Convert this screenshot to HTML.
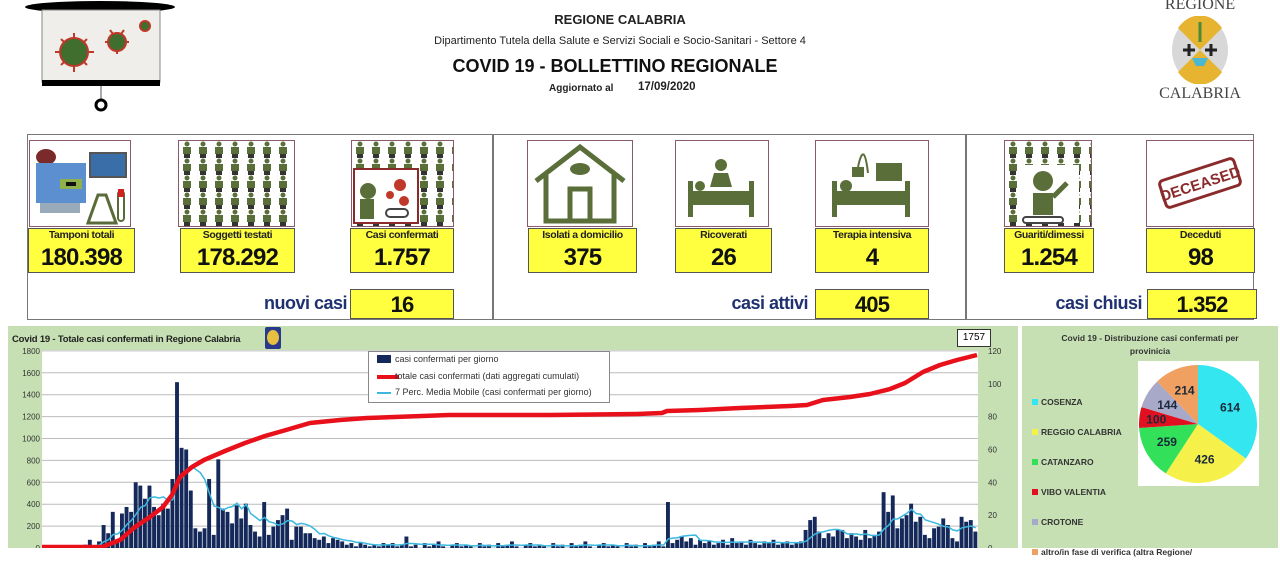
<!DOCTYPE html>
<html><head><meta charset="utf-8">
<style>
*{margin:0;padding:0;box-sizing:border-box}
body{width:1280px;height:548px;overflow:hidden;background:#fff;font-family:"Liberation Sans",sans-serif;position:relative}
.a{position:absolute}
.t{text-align:center;white-space:nowrap}
.img{position:absolute;border:1.5px solid #8a5a6a;background:#fff;overflow:hidden}
.lab{position:absolute;background:#ffff40;border:1.5px solid #555;font-size:10.5px;font-weight:bold;text-align:center;height:15px;line-height:13px;color:#222;letter-spacing:-0.4px}
.val{position:absolute;background:#ffff40;border:1.5px solid #555;border-top:none;font-size:24px;letter-spacing:-0.8px;font-weight:bold;text-align:center;height:31px;line-height:31px;color:#111}
.big{position:absolute;background:#ffff40;border:1.5px solid #555;font-size:22px;letter-spacing:-0.8px;font-weight:bold;text-align:center;height:30px;line-height:30px;color:#111}
.sum{position:absolute;font-size:18px;letter-spacing:-0.5px;font-weight:bold;color:#1f3170;text-align:right;white-space:nowrap}
</style></head><body>

<svg class="a" style="left:25px;top:0" width="160" height="115">
<ellipse cx="75" cy="7" rx="75" ry="6" fill="#000"/>
<rect x="17" y="10" width="118" height="72" fill="#f0eeea" stroke="#888"/>
<rect x="17" y="80" width="118" height="6" fill="#000"/>
<line x1="76" y1="86" x2="76" y2="100" stroke="#556"/>
<circle cx="76" cy="105" r="5" fill="none" stroke="#000" stroke-width="3"/>
<g fill="#3f6e2e" stroke="#c0382a" stroke-width="2">
<circle cx="49" cy="52" r="14"/><circle cx="92" cy="42" r="9"/><circle cx="120" cy="26" r="5"/></g>
<g stroke="#c0382a" stroke-width="2">
<path d="M49 33v5M49 66v6M30 52h5M63 52h6M36 39l4 4M58 61l4 4M62 39l-4 4M36 65l4-4M85 30l3 4M99 30l-3 4M80 42h3M101 42h3M92 54v-3"/></g>
</svg>

<div class="a t" style="left:420px;top:12px;width:400px;font-size:13px;font-weight:bold;color:#222">REGIONE CALABRIA</div>
<div class="a t" style="left:380px;top:35px;width:480px;font-size:11px;color:#222">Dipartimento Tutela della Salute e Servizi Sociali e Socio-Sanitari - Settore 4</div>
<div class="a t" style="left:400px;top:56px;width:430px;font-size:18px;font-weight:bold;color:#111">COVID 19 - BOLLETTINO REGIONALE</div>
<div class="a" style="left:549px;top:83px;font-size:10px;font-weight:bold;color:#222">Aggiornato al</div>
<div class="a" style="left:638px;top:81px;font-size:11.5px;font-weight:bold;color:#222">17/09/2020</div>

<div class="a t" style="left:1150px;top:-4px;width:100px;font-family:'Liberation Serif',serif;font-size:16px;color:#444">REGIONE</div>
<svg class="a" style="left:1170px;top:16px" width="60" height="68">
<ellipse cx="30" cy="34" rx="28" ry="33" fill="#d8d8d8"/>
<path d="M30 34L8 12A28 33 0 0 1 52 12Z" fill="#e6b430"/>
<path d="M30 34L8 56A28 33 0 0 0 52 56Z" fill="#e6b430"/>
<path d="M30 6v20" stroke="#4a8a3a" stroke-width="3"/>
<path d="M22 42h16l-4 8h-8z" fill="#4ab8d0"/>
<path d="M13 34h12M19 28v12M35 34h12M41 28v12" stroke="#222" stroke-width="3"/>
</svg>
<div class="a t" style="left:1150px;top:85px;width:100px;font-family:'Liberation Serif',serif;font-size:16px;color:#444">CALABRIA</div>

<div class="a" style="left:27px;top:134px;width:1227px;height:186px;border:1.5px solid #777"></div>
<div class="a" style="left:492px;top:134px;width:1.5px;height:186px;background:#777"></div>
<div class="a" style="left:965px;top:134px;width:1.5px;height:186px;background:#777"></div>

<div class="img" style="left:29px;top:140px;width:102px;height:87px">
<svg width="100" height="85"><ellipse cx="16" cy="16" rx="10" ry="8" fill="#7a2a2a"/><rect x="6" y="22" width="50" height="40" fill="#5b8fcf"/><rect x="30" y="38" width="22" height="10" fill="#8fb04a"/><rect x="36" y="41" width="10" height="4" fill="#111"/><rect x="10" y="62" width="40" height="10" fill="#9ab"/><rect x="60" y="12" width="36" height="24" fill="#3a6ea8" stroke="#555" stroke-width="2"/><path d="M58 82l10-28h8l10 28z" fill="none" stroke="#5a6a3a" stroke-width="3"/><rect x="88" y="50" width="6" height="30" rx="3" fill="none" stroke="#5a6a3a" stroke-width="2"/><rect x="88" y="48" width="6" height="8" fill="#d02020"/></svg></div>
<div class="img" style="left:178px;top:140px;width:117px;height:87px">
<svg width="115" height="85"><defs><pattern id="p" width="16" height="17" patternUnits="userSpaceOnUse"><circle cx="8" cy="3" r="2.5" fill="#5a6e3a"/><rect x="4" y="6" width="8" height="7" fill="#5a6e3a"/><rect x="5" y="13" width="6" height="4" fill="#333"/></pattern></defs><rect width="115" height="85" fill="url(#p)"/></svg></div>
<div class="img" style="left:351px;top:140px;width:103px;height:87px">
<svg width="101" height="85"><rect width="101" height="85" fill="url(#p)"/><rect x="2" y="28" width="64" height="54" fill="#fff" stroke="#8a2a2a" stroke-width="2"/><circle cx="16" cy="50" r="8" fill="#5a6e3a"/><rect x="8" y="58" width="14" height="20" fill="#5a6e3a"/><circle cx="48" cy="44" r="6" fill="#c0382a"/><circle cx="38" cy="54" r="4" fill="#c0382a"/><circle cx="52" cy="60" r="5" fill="#c0382a"/><rect x="34" y="68" width="22" height="8" rx="4" fill="none" stroke="#444" stroke-width="2"/></svg></div>

<div class="img" style="left:527px;top:140px;width:106px;height:87px">
<svg width="104" height="85"><path d="M8 40L52 6l44 34" fill="none" stroke="#5a6e3a" stroke-width="5"/><path d="M18 34v46h68V34" fill="none" stroke="#5a6e3a" stroke-width="5"/><ellipse cx="52" cy="28" rx="10" ry="6" fill="#5a6e3a"/><rect x="42" y="48" width="20" height="32" fill="none" stroke="#5a6e3a" stroke-width="5"/></svg></div>
<div class="img" style="left:675px;top:140px;width:94px;height:87px">
<svg width="92" height="85"><rect x="12" y="40" width="5" height="36" fill="#5a6e3a"/><rect x="73" y="40" width="5" height="36" fill="#5a6e3a"/><rect x="14" y="50" width="62" height="14" fill="#5a6e3a"/><circle cx="24" cy="45" r="5" fill="#5a6e3a"/><circle cx="45" cy="24" r="6" fill="#5a6e3a"/><path d="M34 46l4-14h14l4 14z" fill="#5a6e3a"/></svg></div>
<div class="img" style="left:815px;top:140px;width:114px;height:87px">
<svg width="112" height="85"><rect x="16" y="40" width="5" height="36" fill="#5a6e3a"/><rect x="89" y="40" width="5" height="36" fill="#5a6e3a"/><rect x="18" y="50" width="74" height="14" fill="#5a6e3a"/><circle cx="30" cy="45" r="6" fill="#5a6e3a"/><rect x="36" y="26" width="12" height="10" fill="#5a6e3a"/><path d="M42 26Q48 -2 52 32" fill="none" stroke="#5a6e3a" stroke-width="2"/><rect x="60" y="22" width="26" height="18" fill="#5a6e3a"/></svg></div>

<div class="img" style="left:1004px;top:140px;width:88px;height:87px">
<svg width="86" height="85"><rect width="86" height="85" fill="url(#p)"/><rect x="14" y="24" width="60" height="58" fill="#fff"/><circle cx="38" cy="40" r="10" fill="#5a6e3a"/><rect x="28" y="52" width="20" height="22" fill="#5a6e3a"/><path d="M48 56l14-14" stroke="#5a6e3a" stroke-width="5"/><rect x="18" y="76" width="40" height="6" rx="3" fill="none" stroke="#444" stroke-width="2"/></svg></div>
<div class="img" style="left:1146px;top:140px;width:108px;height:87px">
<svg width="106" height="85"><g transform="rotate(-18 53 42)"><rect x="14" y="28" width="78" height="28" rx="4" fill="none" stroke="#8a2a2a" stroke-width="3"/><text x="53" y="48" text-anchor="middle" font-family="Liberation Sans" font-weight="bold" font-size="15" fill="#8a2a2a">DECEASED</text></g></svg></div>

<div class="lab" style="left:28px;top:228px;width:107px">Tamponi totali</div><div class="val" style="left:28px;top:242px;width:107px">180.398</div>
<div class="lab" style="left:180px;top:228px;width:115px">Soggetti testati</div><div class="val" style="left:180px;top:242px;width:115px">178.292</div>
<div class="lab" style="left:350px;top:228px;width:104px">Casi confermati</div><div class="val" style="left:350px;top:242px;width:104px">1.757</div>
<div class="lab" style="left:528px;top:228px;width:109px">Isolati a domicilio</div><div class="val" style="left:528px;top:242px;width:109px">375</div>
<div class="lab" style="left:675px;top:228px;width:97px">Ricoverati</div><div class="val" style="left:675px;top:242px;width:97px">26</div>
<div class="lab" style="left:815px;top:228px;width:114px">Terapia intensiva</div><div class="val" style="left:815px;top:242px;width:114px">4</div>
<div class="lab" style="left:1004px;top:228px;width:90px">Guariti/dimessi</div><div class="val" style="left:1004px;top:242px;width:90px">1.254</div>
<div class="lab" style="left:1146px;top:228px;width:109px">Deceduti</div><div class="val" style="left:1146px;top:242px;width:109px">98</div>

<div class="sum" style="left:200px;top:293px;width:147px">nuovi casi</div><div class="big" style="left:350px;top:289px;width:104px">16</div>
<div class="sum" style="left:660px;top:293px;width:148px">casi attivi</div><div class="big" style="left:815px;top:289px;width:114px">405</div>
<div class="sum" style="left:1000px;top:293px;width:142px">casi chiusi</div><div class="big" style="left:1147px;top:289px;width:110px">1.352</div>

<div class="a" style="left:8px;top:326px;width:1010px;height:222px;background:#c6e0b4"></div>
<div class="a" style="left:1022px;top:326px;width:256px;height:222px;background:#c6e0b4"></div>
<div class="a" style="left:12px;top:334px;font-size:9.5px;font-weight:bold;color:#222;letter-spacing:-0.2px">Covid 19 - Totale casi confermati in Regione Calabria</div>
<div class="a" style="left:265px;top:327px;width:16px;height:22px;background:#2a3a8a;border-radius:2px"><div style="margin:3px 2px;width:12px;height:15px;border-radius:50%;background:#e6c040"></div></div>
<svg id="ch" class="a" style="left:0;top:0" width="1020" height="548">
<rect x="42" y="350" width="936" height="198" fill="#fff"/>
</svg>
<div class="a" style="left:957px;top:329px;width:34px;height:18px;border:1.5px solid #333;background:#fff;font-size:10px;text-align:center;line-height:15px">1757</div>
<div class="a" style="left:368px;top:351px;width:242px;height:52px;border:1px solid #888;background:#fff;font-size:9px;color:#333">
<div style="position:absolute;left:8px;top:3px;width:14px;height:8px;background:#14285a"></div><div style="position:absolute;left:26px;top:2px">casi confermati per giorno</div>
<div style="position:absolute;left:8px;top:23px;width:22px;height:4px;background:#e8101a"></div><div style="position:absolute;left:26px;top:19px">totale casi confermati (dati aggregati cumulati)</div>
<div style="position:absolute;left:8px;top:40px;width:14px;height:1.5px;background:#3ab8e0"></div><div style="position:absolute;left:26px;top:35px">7 Perc. Media Mobile (casi confermati per giorno)</div>
</div>

<div class="a t" style="left:1030px;top:332px;width:240px;font-size:8.5px;font-weight:bold;color:#333;line-height:13px">Covid 19 - Distribuzione casi confermati per<br>provinicia</div>
<svg id="pie" class="a" style="left:1138px;top:361px" width="121" height="125"><rect width="121" height="125" fill="#fff"/></svg>
<div class="a" style="left:1032px;top:387px;font-size:8.5px;font-weight:bold;color:#333;line-height:30px">
<div><span style="display:inline-block;width:6px;height:6px;background:#33e6f0;margin-right:3px"></span>COSENZA</div>
<div><span style="display:inline-block;width:6px;height:6px;background:#f5f04a;margin-right:3px"></span>REGGIO CALABRIA</div>
<div><span style="display:inline-block;width:6px;height:6px;background:#33e05a;margin-right:3px"></span>CATANZARO</div>
<div><span style="display:inline-block;width:6px;height:6px;background:#e01020;margin-right:3px"></span>VIBO VALENTIA</div>
<div><span style="display:inline-block;width:6px;height:6px;background:#a8a8c8;margin-right:3px"></span>CROTONE</div>
<div><span style="display:inline-block;width:6px;height:6px;background:#f0a060;margin-right:3px"></span>altro/in fase di verifica (altra Regione/</div>
</div>

<script>
var NS="http://www.w3.org/2000/svg",ch=document.getElementById('ch');
function el(t,a,p){var e=document.createElementNS(NS,t);for(var k in a)e.setAttribute(k,a[k]);(p||ch).appendChild(e);return e;}
for(var i=0;i<10;i++){var y=548-i*21.9;el('line',{x1:42,x2:978,y1:y,y2:y,stroke:'#bbb','stroke-width':1});
var t=el('text',{x:40,y:y+3,'text-anchor':'end','font-size':8,fill:'#333','font-family':'Liberation Sans'});t.textContent=i*200;}
for(var v=0;v<=120;v+=20){var y=548-v/120*197;var t2=el('text',{x:988,y:y+3,'font-size':8,fill:'#333','font-family':'Liberation Sans'});t2.textContent=v;}
var d=[0,0,0,0,0,0,0,1,0,2,5,1,4,14,9,22,5,21,25,22,40,38,30,38,25,20,27,24,42,101,61,60,35,12,10,12,42,8,54,24,22,15,26,18,27,14,10,7,28,8,13,17,20,24,5,13,13,9,9,6,5,7,3,6,5,4,2,3,1,3,2,1,2,1,3,2,3,1,2,7];
var pat=[1,2,0,3,1,2,4,1,0,2,3,1,2,1,0,3];
for(var i=80;i<136;i++)d.push(pat[i%16]);
d.push(28);
var mid=[3,5,7,4,6,2,5,3,4,2,3,5,2,6,3,4,2,5,3,2,4,3,5,2,3,4,2,3,4];
d=d.concat(mid);
d=d.concat([11,17,19,10,6,9,7,11,11,6,9,7,5,11,6,8,10,34,22,32,12,18,20,27,16,19,8,6,12,13,18,14,6,4,19,16,17,10]);
var w=936/d.length;
d.forEach(function(v,i){var h=v*1.642;el('rect',{x:42+i*w,y:548-h,width:w*0.85,height:h,fill:'#14285a'});});
var pts=[];for(var i=0;i<d.length;i++){var s=0,n=0;for(var j=Math.max(0,i-6);j<=i;j++){s+=d[j];n++;}pts.push((42+i*w+w/2).toFixed(1)+','+(548-s/n*1.642).toFixed(1));}
el('polyline',{points:pts.join(' '),fill:'none',stroke:'#3ab8e0','stroke-width':1.5});
el('polyline',{points:'42,547 102,547 120,540 135,527 150,517 163,507 172,495 180,477 192,467 204,460 225,451 245,443 265,436 286,430 310,423 340,420 367,418 449,415 550,415 637,414 662,413 667,411 700,410 740,408 790,406 807,405 823,400 850,397 870,394 890,389 905,383 923,372 940,365 957,360 977,355',fill:'none',stroke:'#e8101a','stroke-width':4.5,'stroke-linejoin':'round'});
var pie=document.getElementById('pie'),vals=[[614,'#33e6f0'],[426,'#f5f04a'],[259,'#33e05a'],[100,'#e01020'],[144,'#a8a8c8'],[214,'#f0a060']],tot=1757,a0=-Math.PI/2,cx=60,cy=63,r=59;
vals.forEach(function(v,k){var a1=a0+v[0]/tot*2*Math.PI;var big=(a1-a0)>Math.PI?1:0;
el('path',{d:'M'+cx+' '+cy+'L'+(cx+r*Math.cos(a0))+' '+(cy+r*Math.sin(a0))+'A'+r+' '+r+' 0 '+big+' 1 '+(cx+r*Math.cos(a1))+' '+(cy+r*Math.sin(a1))+'Z',fill:v[1]},pie);
var am=(a0+a1)/2,rr=k==3?42:36;var t=el('text',{x:cx+rr*Math.cos(am),y:cy+rr*Math.sin(am)+4,'text-anchor':'middle','font-size':12,'font-weight':'bold',fill:'#1a2a3a','font-family':'Liberation Sans'},pie);t.textContent=v[0];a0=a1;});
</script>
</body></html>
